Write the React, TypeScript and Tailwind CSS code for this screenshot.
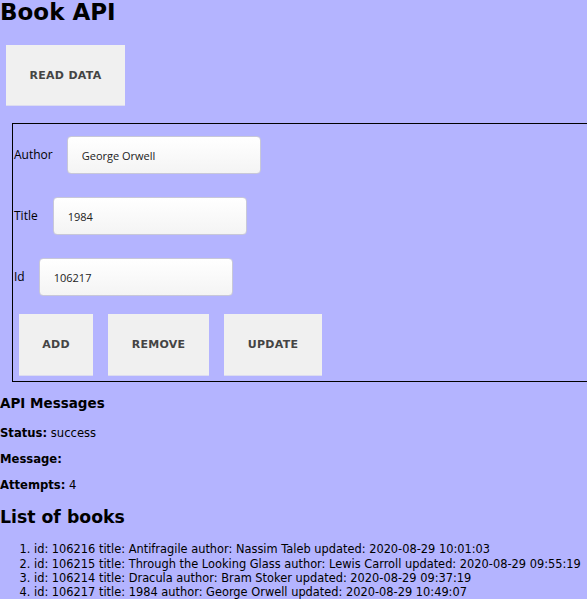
const books = [
  "id: 106216 title: Antifragile author: Nassim Taleb updated: 2020-08-29 10:01:03",
  "id: 106215 title: Through the Looking Glass author: Lewis Carroll updated: 2020-08-29 09:55:19",
  "id: 106214 title: Dracula author: Bram Stoker updated: 2020-08-29 09:37:19",
  "id: 106217 title: 1984 author: George Orwell updated: 2020-08-29 10:49:07",
];

function Btn({label, className}: {label: string; className: string}) {
  return (
    <button
      className={
        "h-[61px] pt-[2px] bg-[#f0f0f0] border-b border-[#dcdcf0] text-[11px] font-bold tracking-wide text-[#444] " +
        className
      }
    >
      {label}
    </button>
  );
}

function Field({label, value, gap}: {label: string; value: string; gap: string}) {
  return (
    <div className="flex items-center">
      <span className="text-[12px] text-black">{label}</span>
      <input
        readOnly
        value={value}
        className={
          "h-[38px] w-[194px] rounded-[4px] border border-[#c8c8d8] bg-gradient-to-b from-white to-[#f4f4f4] px-[14px] text-[11px] text-[#222] outline-none " +
          gap
        }
      />
    </div>
  );
}

export default function App() {
  return (
    <div className="min-h-[599px] bg-[#b4b4ff] font-['DejaVu_Sans',sans-serif] text-black">
      <h1 className="text-[23px] font-bold leading-[24px]">Book API</h1>
      <div className="pl-[6px] pt-[21px]">
        <Btn label="READ DATA" className="w-[119px]" />
      </div>
      <div className="ml-[12px] mt-[17px] w-[590px] border border-black pt-[12px] pb-[5px] font-['Open_Sans',sans-serif]">
        <div className="flex flex-col gap-[23px] pl-px">
          <Field label="Author" value="George Orwell" gap="ml-[14px]" />
          <Field label="Title" value="1984" gap="ml-[15px]" />
          <Field label="Id" value="106217" gap="ml-[14px]" />
        </div>
        <div className="mt-[18px] flex gap-[15px] pl-[6px] font-['DejaVu_Sans',sans-serif]">
          <Btn label="ADD" className="w-[74px] h-[62px]" />
          <Btn label="REMOVE" className="w-[101px] h-[62px]" />
          <Btn label="UPDATE" className="w-[98px] h-[62px]" />
        </div>
      </div>
      <h3 className="mt-[11px] text-[13.5px] font-bold">API Messages</h3>
      <div className="mt-[12px] flex flex-col gap-[10px] text-[11.6px] leading-[16px]">
        <p>
          <b>Status:</b> success
        </p>
        <p>
          <b>Message:</b>
        </p>
        <p>
          <b>Attempts:</b> 4
        </p>
      </div>
      <h2 className="mt-[12px] text-[17.3px] font-bold">List of books</h2>
      <ol className="mt-[11px] list-decimal pl-[34px] text-[11.4px] leading-[14.4px]">
        {books.map((b) => (
          <li key={b}>{b}</li>
        ))}
      </ol>
    </div>
  );
}
